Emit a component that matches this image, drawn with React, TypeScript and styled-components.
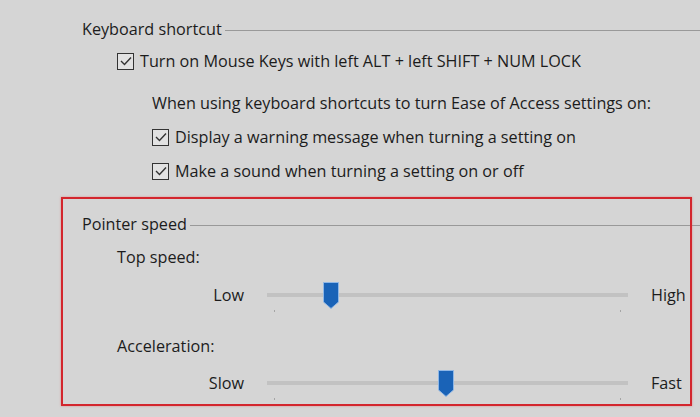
import React from 'react'
import styled, { createGlobalStyle } from 'styled-components'

const GlobalStyle = createGlobalStyle`
  html, body {
    margin: 0;
    padding: 0;
    background: #d5d5d5;
  }
  body {
    font-family: 'Open Sans', 'Noto Sans', sans-serif;
    font-size: 16.2px;
    color: #1c1c1c;
  }
`

const Page = styled.div`
  position: relative;
  width: 700px;
  height: 417px;
  overflow: hidden;
  padding-top: 19px;
  box-sizing: border-box;
`

const GroupHeader = styled.div<{ $top: number }>`
  display: flex;
  align-items: center;
  gap: 3px;
  margin-top: ${({ $top }) => $top}px;
  padding-left: 82px;
  line-height: 20px;
`

const Rule = styled.div`
  flex: 1;
  height: 1px;
  background: #999;
  margin-top: 2px;
`

const CheckRow = styled.label<{ $indent: number; $top: number }>`
  display: flex;
  align-items: center;
  gap: 6px;
  margin-top: ${({ $top }) => $top}px;
  padding-left: ${({ $indent }) => $indent}px;
  line-height: 20px;
`

const Box = styled.span`
  display: flex;
  align-items: center;
  justify-content: center;
  width: 17px;
  height: 17px;
  border: 1.5px solid #333;
  box-sizing: border-box;
  background: #e2e2e2;
`

const Note = styled.div<{ $indent: number; $top: number }>`
  margin-top: ${({ $top }) => $top}px;
  padding-left: ${({ $indent }) => $indent}px;
  line-height: 20px;
`

const SliderRow = styled.div<{ $top: number }>`
  display: grid;
  grid-template-columns: 244px 361px auto;
  column-gap: 23px;
  align-items: center;
  height: 28px;
  margin-top: ${({ $top }) => $top}px;
`

const SideLabel = styled.span<{ $align: 'start' | 'end' }>`
  justify-self: ${({ $align }) => $align};
  line-height: 20px;
`

const Track = styled.div`
  position: relative;
  height: 28px;

  &::before {
    content: '';
    position: absolute;
    left: 0;
    right: 0;
    top: 12px;
    height: 4px;
    background: #c2c2c2;
  }
`

const Tick = styled.span`
  position: absolute;
  top: 29px;
  width: 1px;
  height: 2px;
  background: #a5a5a5;
`

const Thumb = styled.svg`
  position: absolute;
  top: 0;
  width: 18px;
  height: 29px;
  transform: translateX(-50%);
`

const Highlight = styled.div`
  position: absolute;
  left: 61px;
  top: 197px;
  width: 631px;
  height: 209px;
  border: 2px solid #d3262d;
  box-sizing: border-box;
  box-shadow: 0 0 2px rgba(230, 90, 90, 0.6);
  pointer-events: none;
`

const Check = () => (
  <Box>
    <svg width="12" height="10" viewBox="0 0 12 10">
      <path d="M1 5 L4.5 8.5 L11 1.5" fill="none" stroke="#333" strokeWidth="1.4" />
    </svg>
  </Box>
)

const Slider = ({ low, high, value, top }: { low: string; high: string; value: number; top: number }) => (
  <SliderRow $top={top}>
    <SideLabel $align="end">{low}</SideLabel>
    <Track>
      <Tick style={{ left: 7 }} />
      <Tick style={{ right: 7 }} />
      <Thumb viewBox="0 0 18 29" style={{ left: `${value * 100}%` }}>
        <path d="M1.5 1.5 H16.5 V21 L9 27.5 L1.5 21 Z" fill="#1a63b7" stroke="#8fb7e6" strokeWidth="1" />
      </Thumb>
    </Track>
    <SideLabel $align="start">{high}</SideLabel>
  </SliderRow>
)

export default function App() {
  return (
    <>
      <GlobalStyle />
      <Page>
        <GroupHeader $top={0}>
          <span>Keyboard shortcut</span>
          <Rule />
        </GroupHeader>
        <CheckRow $indent={117} $top={12}>
          <Check />
          Turn on Mouse Keys with left ALT + left SHIFT + NUM LOCK
        </CheckRow>
        <Note $indent={152} $top={22}>
          When using keyboard shortcuts to turn Ease of Access settings on:
        </Note>
        <CheckRow $indent={152} $top={14}>
          <Check />
          Display a warning message when turning a setting on
        </CheckRow>
        <CheckRow $indent={152} $top={14}>
          <Check />
          Make a sound when turning a setting on or off
        </CheckRow>

        <GroupHeader $top={33}>
          <span>Pointer speed</span>
          <Rule />
        </GroupHeader>
        <Note $indent={117} $top={13}>Top speed:</Note>
        <Slider low="Low" high="High" value={0.177} top={14} />
        <Note $indent={117} $top={27}>Acceleration:</Note>
        <Slider low="Slow" high="Fast" value={0.495} top={13} />

        <Highlight />
      </Page>
    </>
  )
}
